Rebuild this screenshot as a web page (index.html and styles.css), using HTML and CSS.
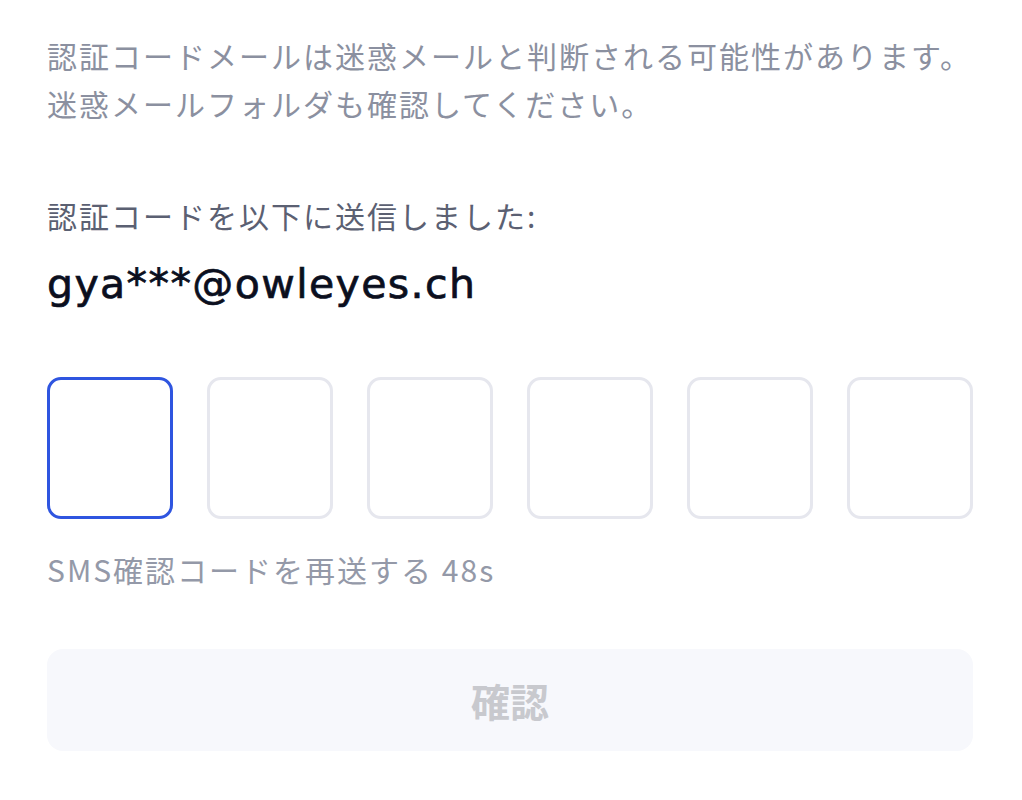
FILE: index.html
```html
<!DOCTYPE html>
<html lang="ja">
<head>
	<meta charset="UTF-8" />
	<title>認証コード</title>
	<link rel="stylesheet" href="styles.css">
</head>
<body>
	<div class="container">
		<p class="notice">認証コードメールは迷惑メールと判断される可能性があります。<br>迷惑メールフォルダも確認してください。</p>
		<p class="sent">認証コードを以下に送信しました:</p>
		<div class="email">gya***@owleyes.ch</div>
		<div class="codes">
			<div class="code active"></div>
			<div class="code"></div>
			<div class="code"></div>
			<div class="code"></div>
			<div class="code"></div>
			<div class="code"></div>
		</div>
		<div class="resend">SMS確認コードを再送する 48s</div>
		<button type="button" class="confirm">確認</button>
	</div>
</body>
</html>
```

FILE: styles.css
```css
body,div,p,button {
	margin: 0;
	padding: 0;
}
body {
	background-color: #fff;
	font-family: "Noto Sans CJK JP", sans-serif;
}
.container {
	width: 926px;
	padding: 31px 0 0 47px;
}
.notice {
	font-size: 30px;
	line-height: 48px;
	letter-spacing: 2px;
	color: #8b90a0;
}
.sent {
	margin-top: 68px;
	font-size: 30px;
	line-height: 40px;
	letter-spacing: 2px;
	color: #5b6072;
}
.email {
	margin-top: 22px;
	font-family: "DejaVu Sans", "Noto Sans CJK JP", sans-serif;
	font-size: 41px;
	letter-spacing: 1.4px;
	line-height: 54px;
	color: #0b0f1e;
	-webkit-text-stroke: 0.7px #0b0f1e;
}
.codes {
	display: flex;
	gap: 34px;
	margin-top: 66px;
}
.code {
	width: 126px;
	height: 142px;
	box-sizing: border-box;
	border: 3px solid #e6e7ee;
	border-radius: 14px;
}
.code.active {
	border-color: #2f55e0;
}
.resend {
	margin-top: 30px;
	font-size: 30px;
	line-height: 40px;
	letter-spacing: 2px;
	color: #9499a8;
}
.confirm {
	display: block;
	width: 926px;
	height: 102px;
	margin-top: 60px;
	border: none;
	border-radius: 16px;
	background-color: #f7f8fc;
	font-family: "Noto Sans CJK JP", sans-serif;
	font-size: 39px;
	font-weight: bold;
	color: #c8c9ce;
	outline: none;
}
```
